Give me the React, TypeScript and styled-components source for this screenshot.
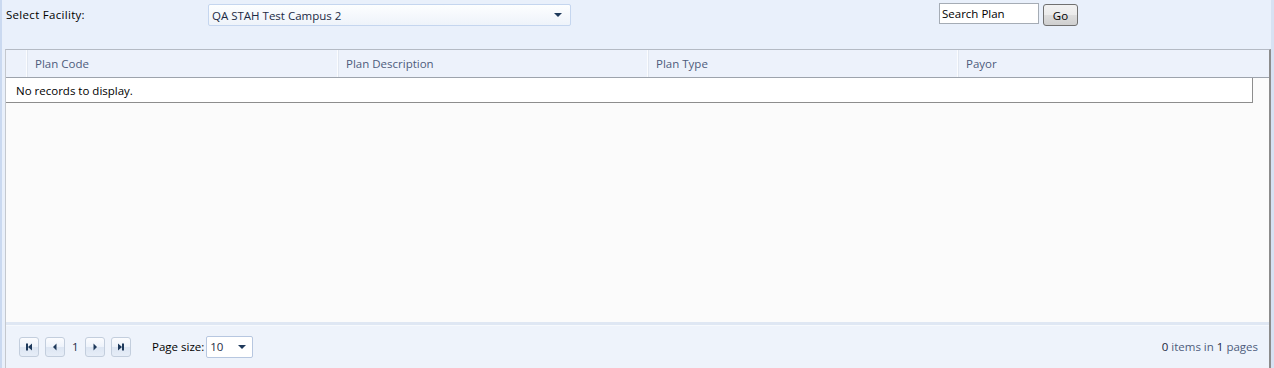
import React from "react";
import styled, { createGlobalStyle } from "styled-components";

const Global = createGlobalStyle`
  html, body { margin: 0; padding: 0; }
  body {
    font-family: "Open Sans", "Noto Sans", sans-serif;
    font-size: 11.5px;
    background: #e9f0fb;
  }
`;

const Page = styled.div`
  width: 1274px;
  height: 368px;
  box-sizing: border-box;
  background: #e9f0fb;
  border-left: 2px solid #cad9f0;
  border-right: 3px solid #d7e2f3;
  display: flex;
  flex-direction: column;
  overflow: hidden;
`;

const TopBar = styled.div`
  height: 49px;
  display: flex;
  align-items: flex-start;
  padding-left: 4px;
  box-sizing: border-box;
`;

const Label = styled.span`
  width: 202px;
  margin-top: 7px;
  color: #000;
  letter-spacing: 0.3px;
`;

const Combo = styled.div`
  width: 363px;
  height: 22px;
  margin-top: 4px;
  box-sizing: border-box;
  border: 1px solid #c5d6ef;
  border-radius: 2px;
  background: linear-gradient(#fdfeff, #eef3fa);
  display: flex;
  align-items: center;
  padding: 0 8px 0 3px;
  color: #1b2a44;
`;

const ComboText = styled.span`
  flex: 1;
`;

const Arrow = styled.span`
  width: 0;
  height: 0;
  border-left: 4px solid transparent;
  border-right: 4px solid transparent;
  border-top: 4px solid #1e395b;
`;

const Spacer = styled.div`
  flex: 1;
`;

const SearchBox = styled.div`
  width: 100px;
  height: 21px;
  margin-top: 3px;
  box-sizing: border-box;
  border: 1px solid #a5acb5;
  background: #fff;
  padding: 1px 2px;
  color: #000;
  display: flex;
  align-items: center;
`;

const GoButton = styled.div`
  width: 35px;
  height: 22px;
  margin: 4px 193px 0 4px;
  box-sizing: border-box;
  border: 1px solid #707070;
  border-radius: 3px;
  background: linear-gradient(#f2f2f2 0%, #ebebeb 50%, #dddddd 51%, #cfcfcf 100%);
  display: flex;
  align-items: center;
  justify-content: center;
  color: #000;
`;

const Grid = styled.div`
  flex: 1;
  margin-left: 3px;
  border-left: 1px solid #c4c8ce;
  border-right: 2px solid #8c8c8c;
  border-top: 1px solid #b4bac4;
  background: #fbfbfb;
  display: flex;
  flex-direction: column;
`;

const HeaderRow = styled.div`
  height: 27px;
  display: grid;
  grid-template-columns: 20px 311px 310px 310px 1fr;
  background: #edf2fb;
  border-bottom: 1px solid #9da3ac;
`;

const HeaderCell = styled.div<{ $first?: boolean }>`
  display: flex;
  align-items: center;
  padding-left: 8px;
  color: #4d5c7c;
  border-left: ${(p) => (p.$first ? "none" : "1px solid #fbfcfe")};
  box-shadow: ${(p) => (p.$first ? "none" : "inset 1px 0 0 #e1e7f0")};
`;

const Body = styled.div`
  flex: 1;
  display: flex;
  flex-direction: column;
`;

const EmptyRow = styled.div`
  width: 1247px;
  height: 25px;
  box-sizing: border-box;
  background: #fff;
  border-right: 1px solid #8d8d8d;
  border-bottom: 1px solid #8d8d8d;
  display: flex;
  align-items: center;
  padding-left: 10px;
  color: #000;
`;

const Pager = styled.div`
  height: 46px;
  box-sizing: border-box;
  border-top: 3px solid #dfe7f3;
  box-shadow: inset 0 1px 0 #f6f9fd;
  background: #eef3fb;
  display: flex;
  align-items: center;
  padding: 0 11px 0 13px;
`;

const NavButton = styled.div`
  width: 20px;
  height: 20px;
  box-sizing: border-box;
  border: 1px solid #c3cedd;
  border-radius: 3px;
  background: linear-gradient(#fbfcfe 0%, #eef3fb 50%, #dde6f3 51%, #e6edf7 100%);
  display: flex;
  align-items: center;
  justify-content: center;
  margin-right: 6px;
`;

const PageNum = styled.span`
  width: 13px;
  padding-left: 1px;
  text-align: left;
  color: #1e2b45;
`;

const SizeLabel = styled.span`
  margin-left: 15px;
  margin-right: 2px;
  color: #000;
`;

const SizeCombo = styled.div`
  width: 47px;
  height: 22px;
  box-sizing: border-box;
  border: 1px solid #b7c7e0;
  border-radius: 2px;
  background: #fff;
  display: flex;
  align-items: center;
  justify-content: space-between;
  padding: 0 6px 0 3px;
  color: #1e2b45;
`;

const Summary = styled.span`
  margin-left: auto;
  color: #4d5c7c;
  b {
    font-weight: normal;
    color: #1c2640;
  }
`;

type NavKind = "first" | "prev" | "next" | "last";

const NavIcon = ({ kind }: { kind: NavKind }) => {
  const c = "#1e395b";
  return (
    <svg width="8" height="8" viewBox="0 0 8 8">
      {kind === "first" && (
        <>
          <rect x="1" y="0.5" width="2" height="7" fill={c} />
          <polygon points="7,0.5 3,4 7,7.5" fill={c} />
        </>
      )}
      {kind === "prev" && <polygon points="5.5,0.5 2,4 5.5,7.5" fill={c} />}
      {kind === "next" && <polygon points="2.5,0.5 6,4 2.5,7.5" fill={c} />}
      {kind === "last" && (
        <>
          <polygon points="1,0.5 5,4 1,7.5" fill={c} />
          <rect x="5" y="0.5" width="2" height="7" fill={c} />
        </>
      )}
    </svg>
  );
};

export default function App() {
  return (
    <>
      <Global />
      <Page>
        <TopBar>
          <Label>Select Facility:</Label>
          <Combo>
            <ComboText>QA STAH Test Campus 2</ComboText>
            <Arrow />
          </Combo>
          <Spacer />
          <SearchBox>Search Plan</SearchBox>
          <GoButton>Go</GoButton>
        </TopBar>
        <Grid>
          <HeaderRow>
            <HeaderCell $first />
            <HeaderCell>Plan Code</HeaderCell>
            <HeaderCell>Plan Description</HeaderCell>
            <HeaderCell>Plan Type</HeaderCell>
            <HeaderCell>Payor</HeaderCell>
          </HeaderRow>
          <Body>
            <EmptyRow>No records to display.</EmptyRow>
          </Body>
          <Pager>
            <NavButton><NavIcon kind="first" /></NavButton>
            <NavButton><NavIcon kind="prev" /></NavButton>
            <PageNum>1</PageNum>
            <NavButton><NavIcon kind="next" /></NavButton>
            <NavButton><NavIcon kind="last" /></NavButton>
            <SizeLabel>Page size:</SizeLabel>
            <SizeCombo>
              <span>10</span>
              <Arrow />
            </SizeCombo>
            <Summary>
              <b>0</b> items in <b>1</b> pages
            </Summary>
          </Pager>
        </Grid>
      </Page>
    </>
  );
}
